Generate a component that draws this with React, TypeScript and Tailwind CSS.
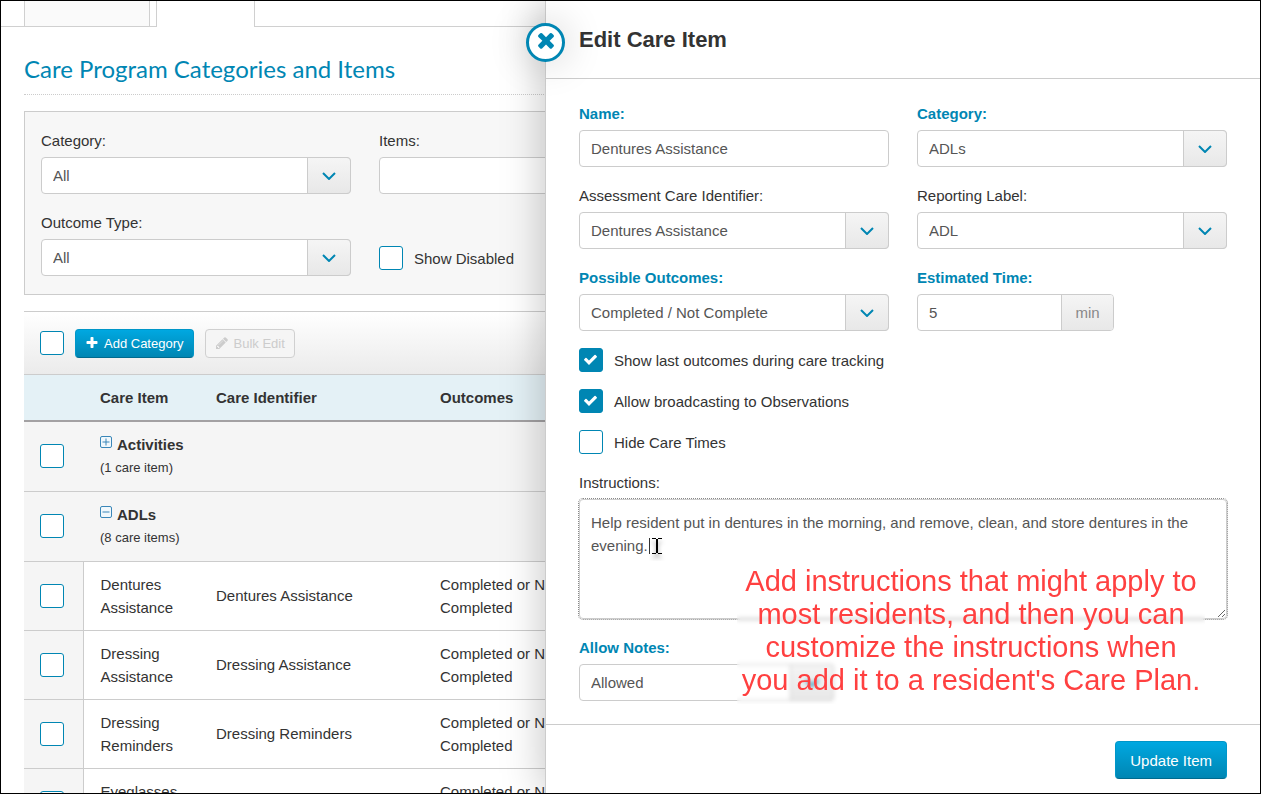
import type { ReactNode } from "react";
import { clsx } from "clsx";

const faPaths = {
  times:
    "M1490 1322q0 40-28 68l-136 136q-28 28-68 28t-68-28l-294-294-294 294q-28 28-68 28t-68-28l-136-136q-28-28-28-68t28-68l294-294-294-294q-28-28-28-68t28-68l136-136q28-28 68-28t68 28l294 294 294-294q28-28 68-28t68 28l136 136q28 28 28 68t-28 68l-294 294 294 294q28 28 28 68z",
  check:
    "M1671 566q0 40-28 68l-724 724-136 136q-28 28-68 28t-68-28l-136-136-362-362q-28-28-28-68t28-68l136-136q28-28 68-28t68 28l294 295 656-657q28-28 68-28t68 28l136 136q28 28 28 68z",
  plus: "M1600 736v192q0 40-28 68t-68 28h-416v416q0 40-28 68t-68 28h-192q-40 0-68-28t-28-68v-416h-416q-40 0-68-28t-28-68v-192q0-40 28-68t68-28h416v-416q0-40 28-68t68-28h192q40 0 68 28t28 68v416h416q40 0 68 28t28 68z",
  pencil:
    "M491 1536l91-91-235-235-91 91v107h128v128h107zm523-928q0-22-22-22-10 0-17 7l-542 542q-7 7-7 17 0 22 22 22 10 0 17-7l542-542q7-7 7-17zm-54-192l416 416-832 832h-416v-416zm683 96q0 53-37 90l-166 166-416-416 166-165q36-38 90-38 53 0 91 38l235 234q37 39 37 91z",
};

const categories = [
  {
    name: "Activities",
    count: "(1 care item)",
    open: false,
    items: [],
  },
  {
    name: "ADLs",
    count: "(8 care items)",
    open: true,
    items: ["Dentures Assistance", "Dressing Assistance", "Dressing Reminders", "Eyeglasses Assistance"],
  },
];

export default function App() {
  return (
    <div className="relative h-screen overflow-hidden border border-black bg-white font-['Liberation_Sans',Arial,sans-serif] text-[15px] leading-[23px] text-[#333]">
      <Tabs />
      <main className="pl-[23px]">
        <h1 className="mt-[26px] border-b border-dotted border-[#ccc] pb-[9px] font-[Lato,sans-serif] text-2xl leading-8 text-[#0086b3]">
          Care Program Categories and Items
        </h1>
        <Filters />
        <CareTable />
      </main>
      <EditDrawer />
    </div>
  );
}

function Tabs() {
  return (
    <nav className="flex h-[26px]" aria-label="Sections">
      <span className="w-[23px] border-b border-[#d0d0d0]" />
      <button aria-label="Previous section" className="w-[126px] border-x border-b border-[#d0d0d0] bg-[#fafafa]" />
      <span className="w-[6px] border-b border-[#d0d0d0]" />
      <button aria-label="Care Program" className="w-[99px] border-x border-[#d0d0d0]" />
      <span className="flex-1 border-b border-[#d0d0d0]" />
    </nav>
  );
}

function Filters() {
  return (
    <section className="mt-4 flex flex-col gap-[17px] border border-[#ccc] bg-[#f7f7f7] px-4 pt-[17px] pb-[18px]">
      <div className="flex gap-7">
        <div className="w-[310px] shrink-0">
          <Select id="filter-category" label="Category:" options={["All"]} />
        </div>
        <div className="w-[310px] shrink-0">
          <Input id="filter-items" label="Items:" />
        </div>
      </div>
      <div className="flex gap-7">
        <div className="w-[310px] shrink-0">
          <Select id="filter-outcome" label="Outcome Type:" options={["All"]} />
        </div>
        <div className="flex items-end pb-[6px]">
          <CheckboxRow label="Show Disabled" />
        </div>
      </div>
    </section>
  );
}

function CareTable() {
  return (
    <section className="mt-4 border-t border-[#ccc]">
      <div className="flex h-[63px] items-center border-b border-[#ccc] bg-linear-to-b from-white to-[#ebebeb] pl-4">
        <Checkbox label="Select all" />
        <button className="ml-[11px] flex h-[29px] items-center gap-[5px] rounded border border-[#0096c8] border-b-[#006a8e] bg-linear-to-b from-[#00a8e1] to-[#0086b3] px-[9px] text-[13px] text-white">
          <FaIcon name="plus" className="size-[14px]" />
          Add Category
        </button>
        <button
          disabled
          className="ml-[11px] flex h-[29px] items-center gap-[5px] rounded border border-[#d0d0d0] bg-[#f5f5f5] px-[9px] text-[13px] text-[#ccc]"
        >
          <FaIcon name="pencil" className="size-[14px]" />
          Bulk Edit
        </button>
      </div>
      <table className="w-full table-fixed text-left">
        <colgroup>
          <col className="w-[59px]" />
          <col className="w-[116px]" />
          <col className="w-[224px]" />
          <col className="w-[170px]" />
          <col />
        </colgroup>
        <thead>
          <tr className="h-[46px] border-b-2 border-[#a3a1a3] bg-[#e4f1f6]">
            <th />
            <th className="pl-[17px]">Care Item</th>
            <th className="pl-[17px]">Care Identifier</th>
            <th className="pl-[17px]">Outcomes</th>
            <th />
          </tr>
        </thead>
        {categories.map((category) => (
          <tbody key={category.name}>
            <tr className="h-[70px] border-b border-[#ccc] bg-[#f5f5f5]">
              <td className="pl-4">
                <Checkbox label={category.name} />
              </td>
              <td colSpan={4} className="pl-[17px]">
                <button className="flex items-center gap-1 font-bold">
                  <ToggleIcon open={category.open} />
                  {category.name}
                </button>
                <div className="text-[13px]">{category.count}</div>
              </td>
            </tr>
            {category.items.map((item) => (
              <tr key={item} className="h-[69px] border-b border-[#ccc]">
                <td className="border-r border-[#ccc] bg-[#f5f5f5] pl-4">
                  <Checkbox label={item} />
                </td>
                <td className="pl-[17px]">{item}</td>
                <td className="pl-[17px]">{item}</td>
                <td className="pl-[17px]">Completed or Not Completed</td>
                <td />
              </tr>
            ))}
          </tbody>
        ))}
      </table>
    </section>
  );
}

function EditDrawer() {
  return (
    <aside className="absolute inset-y-0 right-0 left-[544px] flex flex-col border-l border-[#ccc] bg-white shadow-[0_0_40px_rgba(0,0,0,0.25)]">
      <button
        aria-label="Close"
        className="absolute top-[22px] -left-5 flex size-[39px] items-center justify-center rounded-full border-3 border-[#0086b3] bg-white pb-[5px] text-[#0086b3] shadow-[0_0_40px_rgba(0,0,0,0.2)]"
      >
        <FaIcon name="times" className="size-6" />
      </button>
      <header className="h-[78px] shrink-0 border-b border-[#ccc] px-[33px] pt-[23px]">
        <h2 className="text-[22px] leading-8 font-bold">Edit Care Item</h2>
      </header>
      <form className="relative flex-1 px-[33px] pt-[23px]">
        <div className="grid grid-cols-2 gap-x-7 gap-y-[17px]">
          <Input id="name" label="Name:" required defaultValue="Dentures Assistance" />
          <Select id="category" label="Category:" required options={["ADLs", "Activities"]} />
          <Select id="identifier" label="Assessment Care Identifier:" options={["Dentures Assistance"]} />
          <Select id="reporting" label="Reporting Label:" options={["ADL"]} />
          <Select id="outcomes" label="Possible Outcomes:" required options={["Completed / Not Complete"]} />
          <div>
            <Label htmlFor="time" required>
              Estimated Time:
            </Label>
            <div className="flex h-[37px] w-[197px] overflow-hidden rounded border border-[#ccc]">
              <input id="time" defaultValue="5" className="min-w-0 flex-1 px-[11px] text-[#555] outline-none" />
              <span className="flex w-[52px] items-center justify-center border-l border-[#ccc] bg-linear-to-b from-[#f5f5f5] to-[#e8e8e8] text-[#888]">
                min
              </span>
            </div>
          </div>
        </div>
        <div className="my-[17px] flex flex-col gap-[17px]">
          <CheckboxRow label="Show last outcomes during care tracking" checked />
          <CheckboxRow label="Allow broadcasting to Observations" checked />
          <CheckboxRow label="Hide Care Times" />
        </div>
        <Label htmlFor="instructions">Instructions:</Label>
        <div className="relative">
          <textarea
            id="instructions"
            defaultValue="Help resident put in dentures in the morning, and remove, clean, and store dentures in the evening."
            className="block h-[120px] w-full rounded border border-[#ccc] px-[11px] py-[11px] text-[#555] outline-1 outline-[#888] outline-dotted"
          />
          <TextCursor />
        </div>
        <div className="mt-[17px] w-[255px]">
          <Select id="notes" label="Allow Notes:" required options={["Allowed", "Not Allowed"]} />
        </div>
        <p className="absolute right-[55px] bottom-[20px] w-[468px] pb-[7px] text-center text-[29px] leading-[33px] text-[#ff4040] backdrop-blur-[2px]">
          Add instructions that might apply to
          <br />
          most residents, and then you can
          <br />
          customize the instructions when
          <br />
          you add it to a resident's Care Plan.
        </p>
      </form>
      <footer className="flex h-[69px] shrink-0 items-start justify-end border-t border-[#ccc] px-[33px] pt-4">
        <button className="h-[38px] rounded border border-[#0096c8] border-b-[#006a8e] bg-linear-to-b from-[#00a8e1] to-[#0086b3] px-[14px] text-white">
          Update Item
        </button>
      </footer>
    </aside>
  );
}

function Label({ htmlFor, required, children }: { htmlFor: string; required?: boolean; children: ReactNode }) {
  return (
    <label htmlFor={htmlFor} className={clsx("mb-[5px] block", required && "font-bold text-[#0086b3]")}>
      {children}
    </label>
  );
}

function Input({
  id,
  label,
  required,
  defaultValue,
}: {
  id: string;
  label: string;
  required?: boolean;
  defaultValue?: string;
}) {
  return (
    <div>
      <Label htmlFor={id} required={required}>
        {label}
      </Label>
      <input
        id={id}
        defaultValue={defaultValue}
        className="block h-[37px] w-full rounded border border-[#ccc] bg-white px-[11px] text-[#555] outline-none"
      />
    </div>
  );
}

function Select({
  id,
  label,
  required,
  options,
}: {
  id: string;
  label: string;
  required?: boolean;
  options: string[];
}) {
  return (
    <div>
      <Label htmlFor={id} required={required}>
        {label}
      </Label>
      <div className="relative">
        <select
          id={id}
          className="block h-[37px] w-full appearance-none rounded border border-[#ccc] bg-white px-[11px] text-[#555] outline-none"
        >
          {options.map((option) => (
            <option key={option}>{option}</option>
          ))}
        </select>
        <span className="pointer-events-none absolute inset-y-0 right-0 flex w-11 items-center justify-center rounded-r border border-[#ccc] bg-linear-to-b from-[#f5f5f5] to-[#e8e8e8]">
          <svg viewBox="0 0 14 8" className="h-2 w-[14px] fill-none stroke-[#0086b3] stroke-2">
            <path d="M1 1l6 6 6-6" />
          </svg>
        </span>
      </div>
    </div>
  );
}

function Checkbox({ label, checked }: { label?: string; checked?: boolean }) {
  return (
    <span className="relative block size-6 shrink-0">
      <input
        type="checkbox"
        aria-label={label}
        defaultChecked={checked}
        className="peer block size-6 appearance-none rounded-[3px] border border-[#0086b3] bg-white checked:bg-[#0086b3]"
      />
      <FaIcon
        name="check"
        className="pointer-events-none absolute top-1 left-1 hidden size-[15px] text-white peer-checked:block"
      />
    </span>
  );
}

function CheckboxRow({ label, checked }: { label: string; checked?: boolean }) {
  return (
    <label className="flex h-6 items-center gap-[11px]">
      <Checkbox checked={checked} />
      {label}
    </label>
  );
}

function FaIcon({ name, className }: { name: keyof typeof faPaths; className?: string }) {
  return (
    <svg viewBox="0 0 1792 1792" fill="currentColor" className={className} aria-hidden="true">
      <path d={faPaths[name]} />
    </svg>
  );
}

function ToggleIcon({ open }: { open: boolean }) {
  return (
    <svg viewBox="0 0 13 13" className="mb-1 size-[13px] fill-[#f1f8fc] stroke-[#3a86b8]" aria-hidden="true">
      <rect x="0.5" y="0.5" width="11" height="11" rx="1.5" />
      <path d={open ? "M2.5 6h7" : "M2.5 6h7M6 2.5v7"} />
    </svg>
  );
}

function TextCursor() {
  return (
    <svg
      viewBox="0 0 18 26"
      className="pointer-events-none absolute top-9 left-[70px] h-[26px] w-[18px] fill-none"
      aria-hidden="true"
    >
      <path d="M0.5 3v16" stroke="#333" />
      <g className="drop-shadow-[0_4px_2px_rgba(0,0,0,0.4)]">
        <path d="M3 3.5h4M9 3.5h4M3 18.5h4M9 18.5h4" stroke="#000" />
        <path d="M8 4v14" stroke="#000" strokeWidth="2" />
      </g>
    </svg>
  );
}
